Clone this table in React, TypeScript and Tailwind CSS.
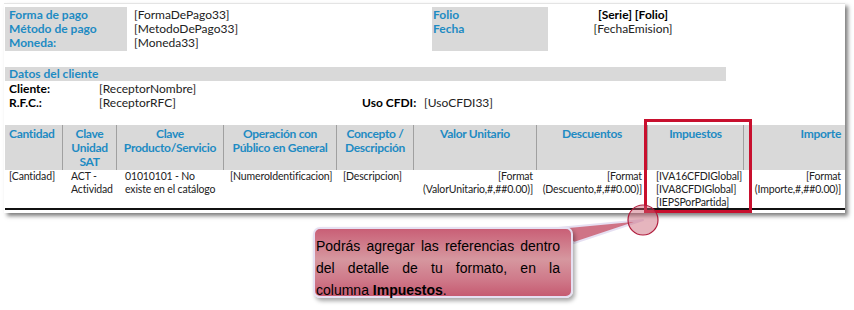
import React from "react";

// Column widths of the detail table (px), taken from the header separators.
const COLS = "grid-cols-[58px_54px_107px_113px_77px_123px_111px_96px_101px]";

const headers = [
  { text: "Cantidad", align: "text-left pl-1" },
  { text: "Clave Unidad SAT", align: "text-center px-1" },
  { text: "Clave Producto/Servicio", align: "text-center" },
  { text: "Operación con Público en General", align: "text-center" },
  { text: "Concepto / Descripción", align: "text-center px-1" },
  { text: "Valor Unitario", align: "text-center" },
  { text: "Descuentos", align: "text-center" },
  { text: "Impuestos", align: "text-center" },
  { text: "Importe", align: "text-right pr-1" },
];

const cells: { lines: string[]; align: string }[] = [
  { lines: ["[Cantidad]"], align: "text-left pl-1" },
  { lines: ["ACT -", "Actividad"], align: "text-left pl-2" },
  { lines: ["01010101 - No", "existe en el catálogo"], align: "text-left pl-2" },
  { lines: ["[NumeroIdentificacion]"], align: "text-left pl-1.5" },
  { lines: ["[Descripcion]"], align: "text-left pl-1.5" },
  { lines: ["[Format", "(ValorUnitario,#,##0.00)]"], align: "text-right pr-1" },
  { lines: ["[Format", "(Descuento,#,##0.00)]"], align: "text-right pr-1.5" },
  { lines: ["[IVA16CFDIGlobal]", "[IVA8CFDIGlobal]", "[IEPSPorPartida]"], align: "text-left pl-2" },
  { lines: ["[Format", "(Importe,#,##0.00)]"], align: "text-right pr-1" },
];

function TopLeft() {
  return (
    <div className="flex">
      <div className="h-[44px] w-[122px] bg-[#d9d9d9] pl-1 pt-px text-[12px] font-bold leading-[14px] text-[#1e8bc3]">
        <div>Forma de pago</div>
        <div>Método de pago</div>
        <div>Moneda:</div>
      </div>
      <div className="w-[305px] pl-[7px] pt-px text-[12px] leading-[14px] text-[#222]">
        <div>[FormaDePago33]</div>
        <div>[MetodoDePago33]</div>
        <div>[Moneda33]</div>
      </div>
      <div className="h-[44px] w-[116px] bg-[#d9d9d9] pl-px pt-px text-[12px] font-bold leading-[14px] text-[#1e8bc3]">
        <div>Folio</div>
        <div>Fecha</div>
      </div>
      <div className="w-[170px] pt-px text-center text-[12px] leading-[14px] text-[#222]">
        <div className="font-bold text-black">[Serie] [Folio]</div>
        <div>[FechaEmision]</div>
      </div>
    </div>
  );
}

export default function App() {
  return (
    <div className="relative h-[310px] w-[854px] overflow-hidden bg-white font-['Lato',sans-serif]">
      {/* Document sheet */}
      <div className="ml-1 mt-[3px] h-[210px] w-[841px] border-t border-[#e4e4e4] bg-white pl-px pt-[3px] shadow-[3px_3px_4px_rgba(0,0,0,0.5)]">
        <TopLeft />

        <div className="mt-4 h-[14px] w-[721px] bg-[#d9d9d9] pl-1 text-[12px] font-bold leading-[14px] text-[#1e8bc3]">
          Datos del cliente
        </div>
        <div className="mt-px text-[12px] leading-[14px] text-[#222]">
          <div className="flex">
            <span className="w-[94px] pl-1 font-bold text-black">Cliente:</span>
            <span>[ReceptorNombre]</span>
          </div>
          <div className="flex">
            <span className="w-[94px] pl-1 font-bold text-black">R.F.C.:</span>
            <span className="w-[263px]">[ReceptorRFC]</span>
            <span className="w-[62px] font-bold text-black">Uso CFDI:</span>
            <span>[UsoCFDI33]</span>
          </div>
        </div>

        {/* Detail table */}
        <div className={`mt-[15px] grid ${COLS} h-[45px] bg-[#d9d9d9]`}>
          {headers.map((h, i) => (
            <div
              key={h.text}
              className={`${h.align} pt-[2px] text-[12px] font-bold leading-[14px] tracking-[-0.3px] text-[#1e8bc3] ${
                i < headers.length - 1 ? "border-r border-[#a0a0a0]" : ""
              }`}
            >
              {h.text}
            </div>
          ))}
        </div>
        <div className={`grid ${COLS} h-[40px] border-b-2 border-[#111] text-[10.5px] leading-[13px] tracking-[-0.15px] text-[#222]`}>
          {cells.map((c, i) => (
            <div key={i} className={`${c.align} whitespace-nowrap`}>
              {c.lines.map((l) => (
                <div key={l}>{l}</div>
              ))}
            </div>
          ))}
        </div>
      </div>

      {/* Highlight around the Impuestos column */}
      <div className="absolute left-[644px] top-[119px] h-[94px] w-[108px] border-[3px] border-[#c8102e]" />

      {/* Callout pointer */}
      <svg className="absolute left-0 top-0" width="854" height="310" aria-hidden>
        <polygon
          points="558,228 574,243 643,220"
          fill="#cf7386"
          stroke="#e6e0f2"
          strokeWidth="2"
          strokeLinejoin="round"
        />
        <circle cx="643" cy="220" r="15" fill="rgba(200,90,110,0.45)" stroke="#b01c3c" strokeWidth="1.2" />
      </svg>

      {/* Callout */}
      <div className="absolute left-[313px] top-[227px] h-[71px] w-[260px] rounded-[7px] border-2 border-[#e6e0f2] bg-[linear-gradient(180deg,#c95f76_0%,#d6979f_45%,#cf7a8a_75%,#c65b72_100%)] pl-px pr-[11px] pt-[6px] text-justify font-['Liberation_Sans',Arial,sans-serif] text-[14px] leading-[22px] text-black shadow-[2px_3px_4px_rgba(0,0,0,0.35)] [text-align-last:left]">
        Podrás agregar las referencias dentro del detalle de tu formato, en la columna <b>Impuestos</b>.
      </div>
    </div>
  );
}
